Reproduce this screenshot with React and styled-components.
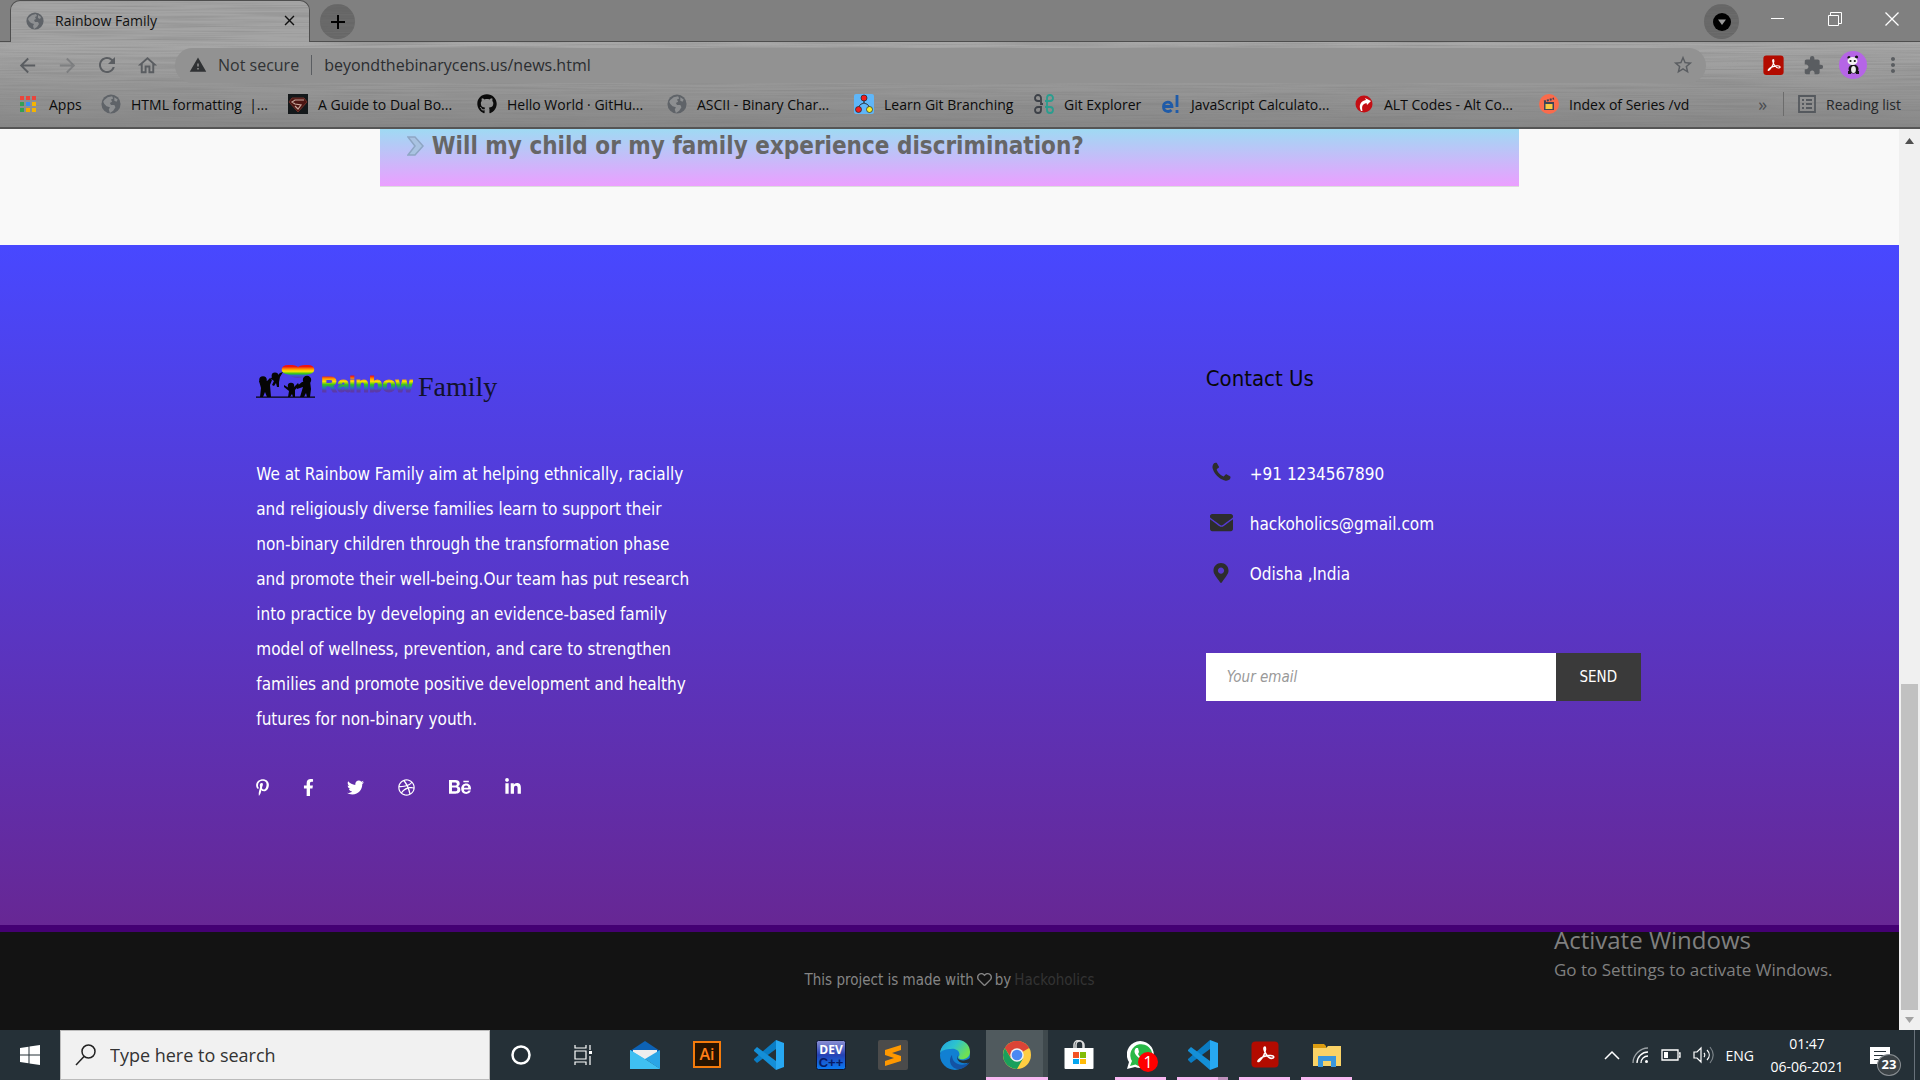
import React from 'react'
import styled, { createGlobalStyle } from 'styled-components'
import {
  FaPinterestP, FaFacebookF, FaTwitter, FaDribbble, FaBehance, FaLinkedinIn,
  FaEnvelope, FaMapMarkerAlt, FaRegHeart, FaGithub
} from 'react-icons/fa'
import { MdOutlineHome, MdRefresh, MdArrowBack, MdArrowForward, MdWarning, MdStarOutline, MdExtension, MdMoreVert, MdClose, MdAdd } from 'react-icons/md'

const uiFont = '"Open Sans", "Noto Sans", sans-serif'
const pageFont = '"DejaVu Sans Condensed", "DejaVu Sans", sans-serif'

const GlobalStyle = createGlobalStyle`
  * { box-sizing: border-box; }
  body { margin: 0; font-family: ${uiFont}; }
  h2, h3, p, ul { margin: 0; padding: 0; }
  ul { list-style: none; }
  button { border: 0; padding: 0; background: none; font: inherit; color: inherit; }
  input { border: 0; padding: 0; background: none; font: inherit; color: inherit; outline: none; min-width: 0; }
  a { color: inherit; text-decoration: none; }
  svg { display: block; flex: none; }
`

const Desktop = styled.div`
  display: flex;
  flex-direction: column;
  min-height: 100vh;
  position: relative;
`

/* ---------- browser ---------- */

const TabStrip = styled.div`
  display: flex;
  height: 42px;
  padding-left: 10px;
  background: #808080;
  border-bottom: 1px solid #4e4e4e;
`

const Metal = styled.svg`
  position: absolute;
  inset: 0;
  width: 100%;
  height: 100%;
  border-radius: inherit;
`

const Tab = styled.div`
  position: relative;
  display: flex;
  align-items: center;
  gap: 11px;
  width: 300px;
  height: 42px;
  padding: 0 11px 2px 15px;
  border: 1px solid #4e4e4e;
  border-bottom: 0;
  border-radius: 10px 10px 0 0;
  background: #a4a4a4;
  font-size: 14px;
  color: #111;

  > * { position: relative; }
  > ${Metal} { position: absolute; }
  > span { flex: 1; }
`

const RoundButton = styled.button`
  position: relative;
  display: flex;
  align-items: center;
  justify-content: center;
  width: 35px;
  height: 35px;
  margin: 4px 0 0 10px;
  border-radius: 50%;
  background: #666;
  overflow: hidden;

  > svg:last-child { position: relative; }
`

const WindowButtons = styled.div`
  display: flex;
  margin-left: auto;

  > ${RoundButton} { margin-right: 10px; }
`

const WindowButton = styled.button`
  width: 57px;
  height: 37px;
  display: flex;
  align-items: center;
  justify-content: center;
`

const Chrome = styled.div`
  position: relative;
  height: 87px;
  background: linear-gradient(#a8a8a8, #888);
  border-bottom: 2px solid #555;
`

const NavRow = styled.div`
  position: relative;
  display: flex;
  align-items: center;
  height: 46px;
  padding: 0 7px;
  color: #5a5d61;
`

const NavButton = styled.button`
  display: flex;
  justify-content: center;
  width: 40px;
  opacity: ${props => props.$dim ? 0.45 : 1};
`

const Omnibox = styled.label`
  flex: 1;
  display: flex;
  align-items: center;
  height: 35px;
  margin: 0 7px 0 8px;
  padding: 0 12px 0 14px;
  border-radius: 18px;
  background: #929292;
  font-size: 16px;
  color: #303234;

  > span {
    padding: 0 12px 0 11px;
    border-right: 1px solid #5a5d61;
    line-height: 20px;
  }

  > input {
    flex: 1;
    padding-left: 12px;
    color: #2b2d30;
  }
`

const Extensions = styled.div`
  display: grid;
  grid-template-columns: repeat(5, 40px);
  align-items: center;
  justify-items: center;
`

const BookmarkRow = styled.nav`
  position: relative;
  display: flex;
  align-items: center;
  height: 32px;
  padding: 0 19px;
  font-size: 14px;
  color: #0b0b0b;
`

const Bookmark = styled.a`
  display: flex;
  align-items: center;
  gap: 10px;
  width: ${props => props.$width}px;
  white-space: pre;

  > svg { width: 20px; height: 20px; }
`

const ReadingList = styled.button`
  display: flex;
  align-items: center;
  gap: 10px;
  height: 24px;
  margin-left: 16px;
  padding-left: 14px;
  border-left: 1px solid #6c6c6c;
  color: #25272a;
`

const Overflow = styled.button`
  margin-left: auto;
  font-size: 18px;
  color: #4a4d51;
`

/* ---------- page ---------- */

const Viewport = styled.div`
  flex: 1;
  display: flex;
  font-family: ${pageFont};
`

const Page = styled.main`
  flex: 1;
  display: flex;
  flex-direction: column;
  background: #f9f9f9;
`

const Question = styled.h2`
  display: flex;
  align-items: center;
  gap: 8px;
  width: 60%;
  height: 58px;
  margin: 0 auto 58px;
  padding: 0 27px 24px;
  border-bottom: 1px solid #ddd;
  background: linear-gradient(#9fdaf3, #eb9fff);
  font-size: 24px;
  line-height: 32px;
  color: #666;
`

const Footer = styled.footer`
  flex: 1;
  display: flex;
  flex-direction: column;
`

const FooterTop = styled.div`
  display: grid;
  grid-template-columns: 1fr 1fr;
  padding: 119px 0 129px;
  border-bottom: 7px solid #440073;
  background: linear-gradient(#4848ff, #672794);
  background-clip: padding-box;
  color: #fff;
`

const Column = styled.section`
  width: 437px;
  margin: 0 auto;
`

const Logo = styled.a`
  display: flex;
  gap: 5px;
  height: 37px;
  margin-bottom: 56px;
  font: 28px/46px "Liberation Serif", serif;
  color: #12122c;
`

const RainbowWord = styled.span`
  font: bold 22px/42px "Liberation Sans", sans-serif;
  background: linear-gradient(#f01010 32%, #ff9a00 40%, #ffe000 47%, #2fc818 56%, #2a72b8 65%, #5b3aa8 72%);
  background-clip: text;
  color: transparent;
  -webkit-text-stroke: 1px transparent;
`

const About = styled.p`
  font-size: 17px;
  line-height: 35px;
`

const Social = styled.ul`
  display: flex;
  align-items: center;
  gap: 34px;
  height: 18px;
  margin-top: 41px;
`

const SocialItem = styled.li`
  display: flex;
  justify-content: center;
  width: ${props => props.$width}px;
`

const ContactTitle = styled.h3`
  margin-bottom: 64px;
  font-size: 22px;
  font-weight: normal;
  line-height: 30px;
  color: #080808;
`

const ContactLine = styled.li`
  display: flex;
  align-items: center;
  gap: 13px;
  height: 32px;
  margin-bottom: 18px;
  font-size: 17px;

  > span:first-child {
    display: flex;
    justify-content: center;
    width: 31px;
    padding-bottom: 3px;
    color: #2d2d2d;
  }
`

const Subscribe = styled.form`
  display: flex;
  width: 435px;
  height: 48px;
  margin-top: 63px;
  font-size: 15px;

  > input {
    flex: 1;
    padding: 0 21px;
    background: #fff;
    color: #333;
  }

  > input::placeholder {
    font-style: italic;
    color: #999;
    opacity: 1;
  }

  > button {
    width: 85px;
    background: #3a3a3a;
  }
`

const Credits = styled.div`
  flex: 1;
  display: flex;
  align-items: center;
  justify-content: center;
  gap: 3px;
  padding-bottom: 3px;
  background: #131313;
  font-size: 15px;
  color: #858585;

  > a { color: #343434; }
`

const Scrollbar = styled.div`
  display: flex;
  flex-direction: column;
  align-items: center;
  width: 21px;
  padding: 9px 0 7px;
  background: #f0f0f0;
`

const Thumb = styled.div`
  width: 17px;
  height: 326px;
  margin: auto 0 7px;
  background: #c1c1c1;
`

const Activation = styled.div`
  position: absolute;
  left: 1554px;
  bottom: 96px;
  font-size: 17px;
  line-height: 28px;
  color: #808080;

  > p:first-child { font-size: 24px; line-height: 32px; }
`

/* ---------- taskbar ---------- */

const Taskbar = styled.div`
  display: flex;
  height: 50px;
  background: #253037;
  color: #fff;
`

const Start = styled.button`
  width: 60px;
  display: flex;
  align-items: center;
  justify-content: center;
`

const Search = styled.label`
  display: flex;
  align-items: center;
  gap: 13px;
  width: 430px;
  padding: 0 14px;
  border: 1px solid #bbb;
  background: #f1f1f1;
  font-size: 18px;

  > input { flex: 1; }
  > input::placeholder { color: #333; opacity: 1; }
`

const TaskButton = styled.button`
  position: relative;
  display: flex;
  align-items: center;
  justify-content: center;
  width: 62px;
  background: ${props => props.$active ? '#505a5e' : 'none'};
  box-shadow: ${props => props.$active ? 'inset -5px 0 #3f494d' : 'none'};

  &::after {
    content: '';
    display: ${props => props.$open ? 'block' : 'none'};
    position: absolute;
    left: ${props => props.$active ? 0 : 5}px;
    right: ${props => props.$active ? 0 : 6}px;
    bottom: 0;
    height: 3px;
    background: ${props => props.$stacked ? 'linear-gradient(90deg, #f8b8f2 80%, #bd90bb 80%)' : '#f8b8f2'};
  }
`

const Count = styled.span`
  position: absolute;
  left: 28px;
  top: 22px;
  width: 20px;
  height: 20px;
  border-radius: 50%;
  background: #f00;
  font-size: 16px;
  line-height: 20px;
`

const Tray = styled.div`
  display: flex;
  align-items: center;
  gap: 12px;
  margin-left: auto;
  padding-right: 5px;
  font-size: 14px;
`

const Clock = styled.time`
  display: flex;
  flex-direction: column;
  align-items: center;
  width: 82px;
  margin-right: 10px;
  line-height: 23px;
`

const Notifications = styled.button`
  position: relative;
  width: 45px;
  height: 50px;
  border-right: 1px solid #68717a;

  > svg { margin-top: 4px; }
`

const Badge = styled.span`
  position: absolute;
  left: 7px;
  top: 24px;
  width: 24px;
  height: 22px;
  border: 1px solid #8b9094;
  border-radius: 50%;
  background: #3b4246;
  font-size: 13px;
  font-weight: bold;
  line-height: 19px;
`

/* ---------- drawings ---------- */

const Brushed = ({ id }) => (
  <Metal aria-hidden="true" preserveAspectRatio="none">
    <filter id={id} x="0" y="0" width="100%" height="100%">
      <feTurbulence type="fractalNoise" baseFrequency="0.009 0.6" numOctaves="2" seed="4" />
      <feColorMatrix type="matrix" values="0 0 0 0 0.2  0 0 0 0 0.2  0 0 0 0 0.2  0.9 0 0 0 -0.34" />
    </filter>
    <rect width="100%" height="100%" filter={`url(#${id})`} />
  </Metal>
)

const Globe = ({ size = 18 }) => (
  <svg width={size} height={size} viewBox="0 0 18 18">
    <circle cx="9" cy="9" r="8.6" fill="#5f6368" />
    <path d="M3 5.5L6 3l4-1 1 2-2 1 1 2-2 1 1 2 3 0 1 2-2 3-3 2-1-3 1-2-3-1-2-2-1-2z" fill="#8d8f91" />
    <path d="M12 3l3 2-1 2-2-1z" fill="#8d8f91" />
  </svg>
)

const AppsGrid = () => (
  <svg viewBox="0 0 20 20">
    {['#e8453c', '#e8453c', '#e8453c', '#34a053', '#3b8cf0', '#f5b400', '#34a053', '#f5a800', '#f5b400'].map((c, i) => (
      <rect key={i} x={1 + (i % 3) * 6} y={2 + Math.floor(i / 3) * 6} width="4" height="4" fill={c} />
    ))}
  </svg>
)

const Shield = () => (
  <svg viewBox="0 0 20 20">
    <rect width="20" height="20" fill="#14181a" />
    <path d="M4 4h12l3 4-9 10L1 8z" fill="#4c1512" stroke="#6d3028" />
    <path d="M16 6H7L4 8l3 2 6 1-3 4-3-3" fill="none" stroke="#c8a79b" strokeWidth="1.200" />
  </svg>
)

const Branching = () => (
  <svg viewBox="0 0 20 20">
    <rect width="20" height="20" rx="2" fill="#5fb6f8" />
    <path d="M10 5v4M5 14c0-4 3-4 5-5 2 1 5 1 5 5" fill="none" stroke="#222" />
    <circle cx="10" cy="4" r="3" fill="#f41c1c" stroke="#222" strokeWidth=".7" />
    <circle cx="4.500" cy="15.500" r="3" fill="#f41c1c" stroke="#222" strokeWidth=".7" />
    <circle cx="15.500" cy="15.500" r="3" fill="#f4ee2c" stroke="#222" strokeWidth=".7" />
  </svg>
)

const Command = () => (
  <svg viewBox="0 0 20 20" fill="none" strokeWidth="1.800">
    <path d="M9 10h-2V4a3 3 0 1 0-3 3M4 13a3 3 0 1 0 3 3v-4M4 13h3M4 7h2" stroke="#3d4148" />
    <path d="M11 7h5a3 3 0 1 0-3-3v12a3 3 0 1 0 3-3h-5" stroke="#2a9d8f" />
  </svg>
)

const Exclaim = () => (
  <svg viewBox="0 0 20 20" fill="none" stroke="#1f5ba8" strokeWidth="2.800">
    <path d="M2 12.500h9c0-6-8.500-5.500-8.500 0 0 5.500 5.500 6 8 3.500" />
    <path d="M16 1v12M16 16v3" />
  </svg>
)

const AltCodes = () => (
  <svg viewBox="0 0 20 20">
    <circle cx="10" cy="10" r="8.500" fill="#c40e14" />
    <path d="M7 17c-3-6 0-10 5-11l-1-2 6 3-4 4-.5-2c-4 1-5 3-4 8z" fill="#fff" />
  </svg>
)

const Clapper = () => (
  <svg viewBox="0 0 20 20">
    <circle cx="10" cy="10" r="10" fill="#f96b4c" />
    <path d="M5 8h10v8H5z" fill="#3b4558" />
    <path d="M6.500 10h7v5h-7z" fill="#f6c944" />
    <path d="M5 7.500l10-3" stroke="#3b4558" strokeWidth="2" strokeDasharray="2 1" />
  </svg>
)

const AcrobatMark = ({ size }) => (
  <svg width={size} height={size} viewBox="0 0 28 28">
    <rect x=".5" y=".5" width="27" height="26" rx="4" fill="#b30b00" />
    <path d="M14 6c-2 0-1 4 1 7s5 5 7 4 0-3-4-2.500-8 2-10 4-1 3 1 1 5-7 5.500-11c0-1.500 0-2.500-.5-2.500z" fill="none" stroke="#fff" strokeWidth="1.500" />
  </svg>
)

const Panda = () => (
  <svg width="28" height="28" viewBox="0 0 28 28">
    <circle cx="14" cy="14" r="14" fill="#b565e6" />
    <circle cx="10" cy="6.500" r="1.600" fill="#111" />
    <circle cx="17.500" cy="6" r="1.600" fill="#111" />
    <ellipse cx="14.500" cy="18" rx="5" ry="4.500" fill="#151515" />
    <ellipse cx="14.500" cy="18.500" rx="2.400" ry="3.500" fill="#eee" />
    <ellipse cx="13.500" cy="10" rx="5" ry="4" fill="#f2f2f2" />
    <circle cx="11.500" cy="10" r="1.100" fill="#111" />
    <circle cx="15.800" cy="10" r="1.100" fill="#111" />
    <path d="M9 20h3v3H9zM17 20h3v3h-3z" fill="#151515" />
  </svg>
)

const ListIcon = () => (
  <svg width="18" height="18" viewBox="0 0 18 18" fill="none" stroke="#55595e" strokeWidth="1.800">
    <path d="M1 1h16v16H1zM4 5h2M4 9h2M4 13h2M8 5h6M8 9h6M8 13h6" />
  </svg>
)

const Phone = () => (
  <svg width="23" height="23" viewBox="0 0 1792 1792" fill="currentColor">
    <path d="M1600 1240q0 27-10 70.500t-21 68.500q-21 50-122 106-94 51-186 51-27 0-53-3.500t-57.500-12.500-47-14.500-55.500-20.500-49-18q-98-35-175-83-127-79-264-216t-216-264q-48-77-83-175-3-9-18-49t-20.500-55.500-14.500-47-12.500-57.500-3.500-53q0-92 51-186 56-101 106-122 25-11 68.500-21t70.500-10q14 0 21 3 18 6 53 76 11 19 30 54t35 63.500 31 53.500q3 4 17.500 25t21.500 35.500 7 28.500q0 20-28.500 50t-62 55-62 53-28.500 46q0 9 5 22.500t8.500 20.500 14 24 11.500 19q76 137 174 235t235 174q2 1 19 11.500t24 14 20.500 8.500 22.500 5q18 0 46-28.500t53-62 55-62 50-28.500q14 0 28.500 7t35.500 21.500 25 17.500q25 15 53.500 31t63.500 35 54 30q70 35 76 53 3 7 3 21z" />
  </svg>
)

const FamilyDrawing = () => (
  <svg width="60" height="37" viewBox="0 0 60 37">
    <defs>
      <linearGradient id="heart" x1="0" x2="0" y1="0" y2="1">
        <stop offset=".12" stopColor="#f01212" />
        <stop offset=".3" stopColor="#ff8a00" />
        <stop offset=".48" stopColor="#ffe600" />
        <stop offset=".68" stopColor="#27c422" />
        <stop offset=".8" stopColor="#3a5fd0" />
        <stop offset="1" stopColor="#5a35b0" />
      </linearGradient>
    </defs>
    <path d="M42 14c-6 0-7-3-12-4-6-1-6-9 2-9 5 0 7 0 10 2 3-2 6-2 10-2 8 0 8 8 2 9-5 1-6 4-12 4z" fill="url(#heart)" />
    <g fill="#050505">
      <circle cx="7" cy="16" r="3.800" />
      <path d="M3 17h8l3-3 2 2-2 5 1 12h-4l-2-5-2 5H4l1-9z" />
      <circle cx="19" cy="12" r="3.400" />
      <path d="M14 14l6-1 4-4 3-1-3 5-1 5 0 5h-2l-1-4-2 3-2-1 2-4z" />
      <circle cx="35" cy="22" r="3.200" />
      <path d="M28 21l5 3h4l5-5 1 2-4 5 0 7h-2l-1-3-2 3h-2l1-6-5-4z" />
      <circle cx="51" cy="16" r="4.200" />
      <path d="M46 18l-6 5 1 2 6-2-3 10h4l2-4 1 4h3l1-8-1-8z" />
      <path d="M0 32.500h59v1.300H0z" />
    </g>
  </svg>
)

const MailIcon = () => (
  <svg width="30" height="30" viewBox="0 0 30 30">
    <path d="M0 11L15 1l15 10v3H0z" fill="#0d62b5" />
    <path d="M3 10h24v9H3z" fill="#eee" />
    <path d="M0 10l30 19H0z" fill="#35b6ee" />
    <path d="M30 10v19L15 19z" fill="#2aa5e6" />
    <path d="M0 29V10l15 9 15 10z" fill="#3fc0f2" />
  </svg>
)

const IllustratorIcon = () => (
  <svg width="28" height="28" viewBox="0 0 28 28">
    <rect x="1" y="1" width="26" height="25" fill="#261300" stroke="#f47b0c" strokeWidth="2" />
    <text x="14" y="19" textAnchor="middle" fill="#ff7f18" fontSize="16" fontFamily="Open Sans" fontWeight="600">Ai</text>
  </svg>
)

const CodeIcon = () => (
  <svg width="30" height="30" viewBox="0 0 30 30">
    <path d="M22 9L3 23l-3-3v-1L22 0z" fill="#0a7cc4" />
    <path d="M22 21L3 7 0 10v1l22 19z" fill="#148fd8" />
    <path d="M22 0l8 3v24l-8 3z" fill="#27a8f2" />
  </svg>
)

const DevIcon = () => (
  <svg width="30" height="30" viewBox="0 0 30 30">
    <linearGradient id="dev" x1="0" x2="0" y1="0" y2="1">
      <stop offset="0" stopColor="#8d91d4" />
      <stop offset=".5" stopColor="#2542b5" />
      <stop offset="1" stopColor="#0a7cf4" />
    </linearGradient>
    <rect x=".5" y=".5" width="29" height="29" rx="2" fill="url(#dev)" stroke="#0d1530" />
    <text x="15" y="14" textAnchor="middle" fill="#fff" fontSize="12" fontFamily="Open Sans" fontWeight="bold">DEV</text>
    <text x="15" y="27" textAnchor="middle" fill="#071a63" fontSize="13" fontFamily="Liberation Sans" fontWeight="bold">C++</text>
  </svg>
)

const SublimeIcon = () => (
  <svg width="30" height="30" viewBox="0 0 30 30">
    <rect width="30" height="30" rx="2" fill="#4b4b4b" />
    <path d="M7 10l16-5v5l-9 3 9 3v5L7 26v-5l9-3-9-3z" fill="#ff9800" />
  </svg>
)

const EdgeIcon = () => (
  <svg width="30" height="30" viewBox="0 0 30 30">
    <defs>
      <linearGradient id="edge" x1="0" x2="1" y1="0" y2=".5">
        <stop offset="0" stopColor="#239fe0" />
        <stop offset=".5" stopColor="#2cc3cf" />
        <stop offset="1" stopColor="#6fe052" />
      </linearGradient>
    </defs>
    <circle cx="15" cy="15" r="15" fill="#1180d2" />
    <path d="M0 13C2-4 30-5 30 12c0 6-6 8-10 7-2-1-2-2-1-3 2-4-3-8-8-7C6 9 2 10 0 13z" fill="url(#edge)" />
    <path d="M12 15c-5 6 0 15 8 14 5-1 8-4 10-7-7 5-18 3-18-7z" fill="#1353a4" />
    <path d="M18 14c-1 3-1 5 2 6 4 1 7 0 10-2v4c-7 3-13 0-13-5z" fill="#253037" />
  </svg>
)

const ChromeIcon = () => (
  <svg width="28" height="28" viewBox="0 0 28 28">
    <circle cx="14" cy="14" r="14" fill="#ffcd42" />
    <path d="M14 14L1.900 7A14 14 0 0 1 26.100 7z" fill="#db4437" />
    <path d="M14 7h12.100A14 14 0 0 0 1.900 7L8 17z" fill="#db4437" />
    <path d="M1.900 7A14 14 0 0 0 14 28l6-10.500L14 14 8 17.500z" fill="#1a9f5b" />
    <circle cx="14" cy="14" r="6.800" fill="#f1f1f1" />
    <circle cx="14" cy="14" r="5.300" fill="#4a89f3" />
  </svg>
)

const StoreIcon = () => (
  <svg width="30" height="30" viewBox="0 0 30 30">
    <path d="M10 8V5a4 4 0 0 1 9 0v3M12 8V5a4 4 0 0 1 8 0v3" fill="none" stroke="#ddd" strokeWidth="1.500" />
    <path d="M.5 8h29v20a1 1 0 0 1-1 1h-27a1 1 0 0 1-1-1z" fill="#fff" />
    <path d="M9 12h6v6H9z" fill="#f35325" />
    <path d="M16 12h6v6h-6z" fill="#81bc06" />
    <path d="M9 19h6v5H9z" fill="#05a6f0" />
    <path d="M16 19h6v5h-6z" fill="#ffba08" />
  </svg>
)

const WhatsappIcon = () => (
  <svg width="28" height="28" viewBox="0 0 28 28">
    <path d="M0 28l2-7A13.500 13.500 0 1 1 8 26z" fill="#fff" />
    <path d="M3 25l2-5A11 11 0 1 1 8.500 23.500z" fill="#29b847" />
    <path d="M9 7c-3 3-1 7 3 10s8 4 9 0l-4-2-2 2c-2-1-3-2-4-4l1-2-1-4z" fill="#fff" />
  </svg>
)

const FolderIcon = () => (
  <svg width="28" height="26" viewBox="0 0 28 26">
    <path d="M0 2h11l2 2v5H0z" fill="#dc9c10" />
    <path d="M0 6h13l2-2h13v20H0z" fill="#fad266" />
    <path d="M5 25V14h18v11h-5v-6h-8v6z" fill="#3a96dd" />
  </svg>
)

const TaskViewIcon = () => (
  <svg width="18" height="20" viewBox="0 0 18 20" fill="none" stroke="#fff" strokeWidth="1.200">
    <path d="M1 0v3h11V0M1 20v-3h11v3M1 6h11v8H1zM16 0v5M16 11v9" />
    <path d="M15 6h3v3h-3z" fill="#fff" stroke="none" />
  </svg>
)

const bookmarks = [
  { label: 'Apps', icon: <AppsGrid />, width: 82 },
  { label: 'HTML formatting  |...', icon: <Globe />, width: 187 },
  { label: 'A Guide to Dual Bo...', icon: <Shield />, width: 189 },
  { label: 'Hello World · GitHu...', icon: <FaGithub />, width: 190 },
  { label: 'ASCII - Binary Char...', icon: <Globe />, width: 187 },
  { label: 'Learn Git Branching', icon: <Branching />, width: 180 },
  { label: 'Git Explorer', icon: <Command />, width: 127 },
  { label: 'JavaScript Calculato...', icon: <Exclaim />, width: 193 },
  { label: 'ALT Codes - Alt Co...', icon: <AltCodes />, width: 185 },
  { label: 'Index of Series /vd', icon: <Clapper />, width: 160 }
]

const socials = [
  { name: 'Pinterest', Icon: FaPinterestP, size: 17, width: 13 },
  { name: 'Facebook', Icon: FaFacebookF, size: 17, width: 10 },
  { name: 'Twitter', Icon: FaTwitter, size: 17, width: 17 },
  { name: 'Dribbble', Icon: FaDribbble, size: 17, width: 17 },
  { name: 'Behance', Icon: FaBehance, size: 22, width: 22 },
  { name: 'LinkedIn', Icon: FaLinkedinIn, size: 18, width: 16 }
]

const apps = [
  { name: 'Cortana', icon: <svg width="20" height="20" viewBox="0 0 20 20"><circle cx="10" cy="10" r="8.500" fill="none" stroke="#fff" strokeWidth="2.500" /></svg> },
  { name: 'Task view', icon: <TaskViewIcon /> },
  { name: 'Mail', icon: <MailIcon /> },
  { name: 'Illustrator', icon: <IllustratorIcon /> },
  { name: 'Code', icon: <CodeIcon /> },
  { name: 'Dev-C++', icon: <DevIcon /> },
  { name: 'Sublime Text', icon: <SublimeIcon /> },
  { name: 'Edge', icon: <EdgeIcon /> },
  { name: 'Chrome', icon: <ChromeIcon />, active: true, open: true },
  { name: 'Store', icon: <StoreIcon /> },
  { name: 'WhatsApp', icon: <WhatsappIcon />, open: true, count: 1 },
  { name: 'Code window', icon: <CodeIcon />, open: true, stacked: true },
  { name: 'Acrobat', icon: <AcrobatMark size={28} />, open: true },
  { name: 'Explorer', icon: <FolderIcon />, open: true }
]

const Browser = () => (
  <header>
    <TabStrip>
      <Tab>
        <Brushed id="metal-tab" />
        <Globe />
        <span>Rainbow Family</span>
        <button aria-label="Close tab"><MdClose size={17} /></button>
      </Tab>
      <RoundButton aria-label="New tab">
        <Brushed id="metal-new" />
        <MdAdd size={24} color="#000" />
      </RoundButton>
      <WindowButtons>
        <RoundButton aria-label="Search tabs">
          <Brushed id="metal-search" />
          <svg width="18" height="18" viewBox="0 0 18 18"><circle cx="9" cy="9" r="9" /><path d="M5 6.500h8L9 12z" fill="#999" /></svg>
        </RoundButton>
        <WindowButton aria-label="Minimize">
          <svg width="13" height="13" stroke="#fff"><path d="M0 6.500h13" /></svg>
        </WindowButton>
        <WindowButton aria-label="Restore">
          <svg width="14" height="14" fill="none" stroke="#fff"><path d="M.5 3.500h10v10H.5zM2.500 3.500v-3h11v11h-3" /></svg>
        </WindowButton>
        <WindowButton aria-label="Close">
          <svg width="14" height="14" stroke="#fff" strokeWidth="1.300"><path d="M.5.5l13 13M13.500.5l-13 13" /></svg>
        </WindowButton>
      </WindowButtons>
    </TabStrip>
    <Chrome>
      <Brushed id="metal-bar" />
      <NavRow>
        <NavButton aria-label="Back"><MdArrowBack size={23} /></NavButton>
        <NavButton aria-label="Forward" $dim><MdArrowForward size={23} /></NavButton>
        <NavButton aria-label="Reload"><MdRefresh size={24} /></NavButton>
        <NavButton aria-label="Home"><MdOutlineHome size={23} /></NavButton>
        <Omnibox>
          <MdWarning size={18} />
          <span>Not secure</span>
          <input aria-label="Address" defaultValue="beyondthebinarycens.us/news.html" />
          <MdStarOutline size={22} color="#5a5d61" />
        </Omnibox>
        <Extensions>
          <svg width="16" height="16" fill="#9c9c9c">
            <path d="M0 2h1v1H0zM4 0h1v1H4zM9 2h1v1H9zM14 0h1v1h-1zM2 6h1v1H2zM7 5h1v1H7zM12 6h1v1h-1zM5 10h1v1H5zM10 10h1v1h-1zM7 14h1v1H7z" />
          </svg>
          <AcrobatMark size={21} />
          <MdExtension size={21} />
          <Panda />
          <MdMoreVert size={24} />
        </Extensions>
      </NavRow>
      <BookmarkRow>
        {bookmarks.map(({ label, icon, width }) => (
          <Bookmark key={label} href="#" $width={width}>{icon}{label}</Bookmark>
        ))}
        <Overflow aria-label="More bookmarks">»</Overflow>
        <ReadingList><ListIcon />Reading list</ReadingList>
      </BookmarkRow>
    </Chrome>
  </header>
)

const App = () => (
  <Desktop>
    <GlobalStyle />
    <Browser />
    <Viewport>
      <Page>
        <Question>
          <svg width="17" height="20" viewBox="0 0 17 20">
            <path d="M1 1h7l8 9-8 9H1l7-9z" fill="#a9c3e2" stroke="#8ea6c4" strokeWidth="1.500" />
          </svg>
          Will my child or my family experience discrimination?
        </Question>
        <Footer>
          <FooterTop>
            <Column>
              <Logo href="#">
                <FamilyDrawing />
                <RainbowWord>Rainbow</RainbowWord>
                Family
              </Logo>
              <About>
                We at Rainbow Family aim at helping ethnically, racially and religiously diverse families
                learn to support their non-binary children through the transformation phase and promote
                their well-being.Our team has put research into practice by developing an evidence-based
                family model of wellness, prevention, and care to strengthen families and promote positive
                development and healthy futures for non-binary youth.
              </About>
              <Social>
                {socials.map(({ name, Icon, size, width }) => (
                  <SocialItem key={name} $width={width}><a href="#" aria-label={name}><Icon size={size} /></a></SocialItem>
                ))}
              </Social>
            </Column>
            <Column>
              <ContactTitle>Contact Us</ContactTitle>
              <ul>
                <ContactLine><span><Phone /></span><span>+91 1234567890</span></ContactLine>
                <ContactLine><span><FaEnvelope size={23} /></span><span>hackoholics@gmail.com</span></ContactLine>
                <ContactLine><span><FaMapMarkerAlt size={20} /></span><span>Odisha ,India</span></ContactLine>
              </ul>
              <Subscribe>
                <input type="email" aria-label="Your email" placeholder="Your email" />
                <button type="button">SEND</button>
              </Subscribe>
            </Column>
          </FooterTop>
          <Credits>
            This project is made with <FaRegHeart size={15} /> by <a href="#">Hackoholics</a>
          </Credits>
        </Footer>
      </Page>
      <Scrollbar>
        <svg width="9" height="6"><path d="M0 6L4.500 0 9 6z" fill="#505050" /></svg>
        <Thumb />
        <svg width="9" height="6"><path d="M0 0l4.500 6L9 0z" fill="#a3a3a3" /></svg>
      </Scrollbar>
    </Viewport>
    <Activation>
      <p>Activate Windows</p>
      <p>Go to Settings to activate Windows.</p>
    </Activation>
    <Taskbar>
      <Start aria-label="Start">
        <svg width="20" height="20" fill="#fff"><path d="M0 3l8.500-1.200v7.700H0zM9.500 1.600L20 0v9.500H9.500zM0 10.500h8.500v7.700L0 17zM9.500 10.500H20V20L9.500 18.400z" /></svg>
      </Start>
      <Search>
        <svg width="22" height="22" fill="none" stroke="#222" strokeWidth="1.500"><circle cx="13.500" cy="7.500" r="6.500" /><path d="M9 12.500L1 21" /></svg>
        <input aria-label="Search" placeholder="Type here to search" />
      </Search>
      {apps.map(({ name, icon, active, open, stacked, count }) => (
        <TaskButton key={name} aria-label={name} $active={active} $open={open} $stacked={stacked}>
          {icon}
          {count && <Count>{count}</Count>}
        </TaskButton>
      ))}
      <Tray>
        <svg width="16" height="10" fill="none" stroke="#fff" strokeWidth="1.500"><path d="M1 9l7-7 7 7" /></svg>
        <svg width="17" height="17" fill="none" stroke="#fff" strokeWidth="1.300">
          <path d="M1 16C1 8 8 1 16 1" stroke="#9aa0a4" /><path d="M5 16C5 10 10 5 16 5M9 16c0-4 3-7 7-7" />
          <circle cx="14.500" cy="14.500" r="1.500" fill="#fff" stroke="none" />
        </svg>
        <svg width="20" height="12" fill="none" stroke="#fff" strokeWidth="1.300"><path d="M1 1h16v10H1zM18 4h1v4h-1" /><path d="M3 3h4v6H3z" fill="#fff" stroke="none" /></svg>
        <svg width="21" height="18" fill="none" stroke="#fff" strokeWidth="1.200">
          <path d="M1 6h3l4-4v14l-4-4H1zM11 7c1 1 1 3 0 4M14 4c3 3 3 7 0 10" /><path d="M17 1c4 5 4 11 0 16" stroke="#7a8287" />
        </svg>
        <span>ENG</span>
        <Clock><span>01:47</span><span>06-06-2021</span></Clock>
        <Notifications aria-label="Notifications">
          <svg width="20" height="20" viewBox="0 0 20 20"><path d="M0 0h20v17H0z" fill="#fff" /><path d="M4 4.500h12M4 8.500h12M4 12.500h8" stroke="#253037" strokeWidth="1.200" /></svg>
          <Badge>23</Badge>
        </Notifications>
      </Tray>
    </Taskbar>
  </Desktop>
)

export default App
